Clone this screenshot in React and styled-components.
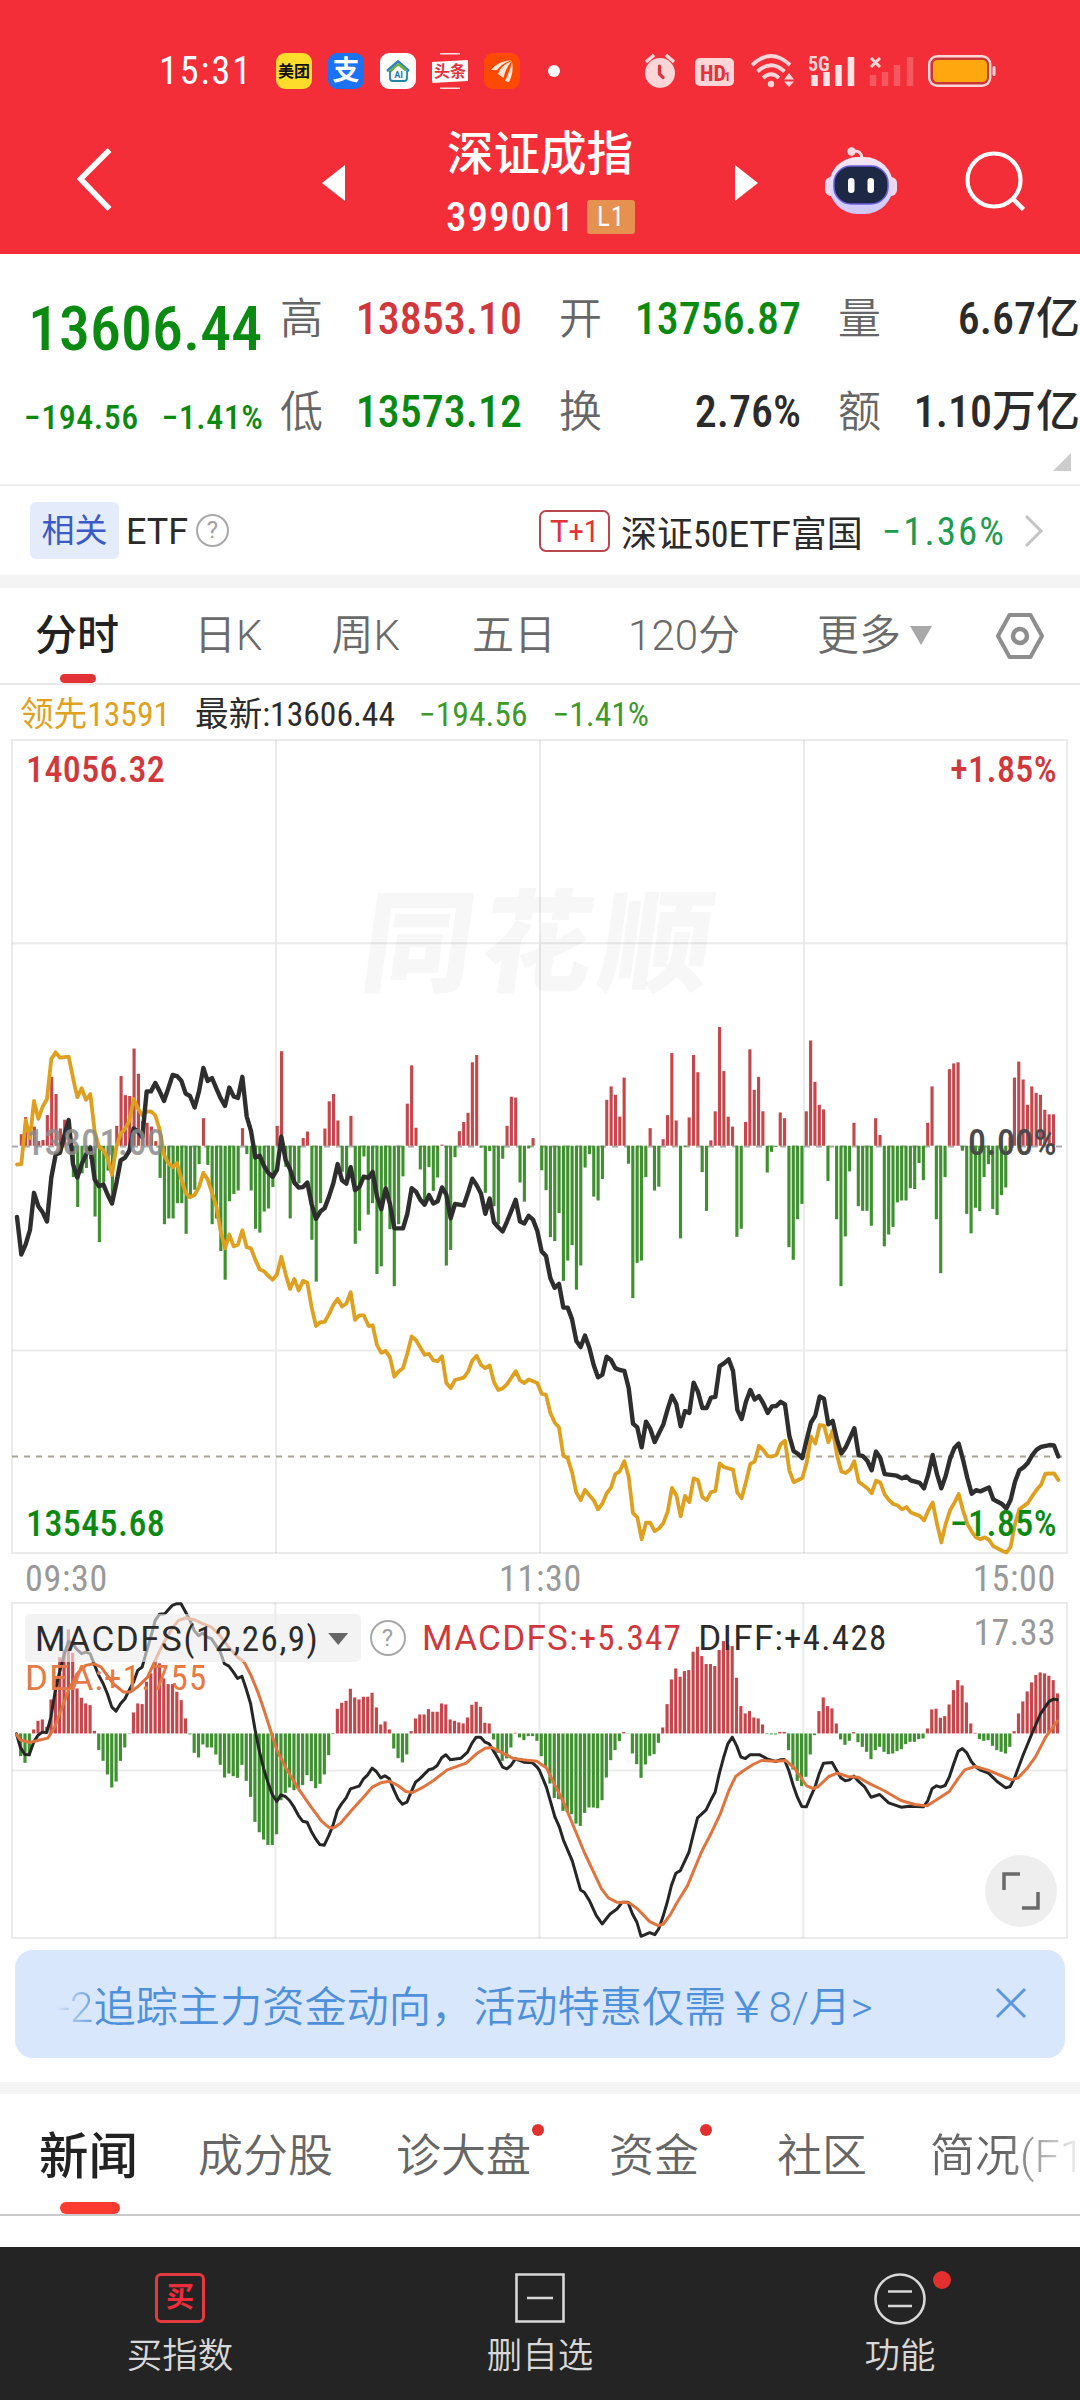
import { Fragment } from "react";
import styled, { createGlobalStyle, css } from "styled-components";

const RED = "#d0383c";
const GREEN = "#0b8a12";
const DARK = "#2b2b2b";

const quoteColumns = [
  [
    { label: "高", value: "13853.10", color: RED },
    { label: "低", value: "13573.12", color: GREEN },
  ],
  [
    { label: "开", value: "13756.87", color: GREEN },
    { label: "换", value: "2.76%", color: DARK },
  ],
  [
    { label: "量", value: "6.67亿", color: DARK },
    { label: "额", value: "1.10万亿", color: DARK },
  ],
];

const periodTabs = [
  { label: "分时", gap: 0, active: true },
  { label: "日K", gap: 75 },
  { label: "周K", gap: 69 },
  { label: "五日", gap: 72 },
  { label: "120分", gap: 72 },
  { label: "更多", gap: 77, arrow: true },
];

const newsTabs = [
  { label: "新闻", gap: 0, active: true },
  { label: "成分股", gap: 60 },
  { label: "诊大盘", gap: 63, dot: true },
  { label: "资金", gap: 78, dot: true },
  { label: "社区", gap: 78 },
  { label: "简况(F10)", gap: 63, faded: true },
];

// one value per minute, above (+) or below (-) yesterday's close
const leadBars = [
  0, 30, 75, 25, 50, 12, 15, 80, 180, 135, 45, 68, 35, -82, -160, -72, -58, -35, -185, -252, -95, -65, -140, 52, 182,
  132, 130, 254, 188, 65, 60, 50, 12, -84, -205, -190, -190, -150, -150, -230, -130, -115, -48, 72, -50, -205, -190,
  -275, -350, -145, -126, -117, 46, -22, -117, -217, -227, -172, -164, -108, 52, 247, -55, -190, -103, -98, 20, 37,
  -246, -355, -150, 45, 116, 135, 66, -68, -90, 78, -256, -222, -28, -180, -150, -335, -315, -105, -218, -367, -205,
  -80, 110, 210, 47, -62, -150, -56, -118, -83, 3, -313, -272, -30, 38, 62, 86, 218, 237, -5, -123, -14, -158, -205,
  -34, 52, 128, 126, -96, -146, -7, 20, 0, -64, -116, -239, -249, -176, -353, -300, -260, -376, -313, -57, -22, -133,
  -143, -87, 120, 155, 133, 76, 178, -47, -398, -306, -300, -82, 46, -117, -107, 17, 80, 242, 66, -242, -3, 74, 237,
  192, -69, -170, 14, 90, 310, 195, 76, 50, -238, -217, 62, 252, 146, 180, 90, -70, -16, -3, 87, 72, -265, -298, -192,
  -152, 90, 275, 167, 107, 95, -92, 0, -192, -367, -237, -67, 60, -158, -170, -170, -209, 72, 28, -263, -232, -212,
  -148, -143, -143, -111, -113, -45, -90, 60, 155, -192, -333, -82, 200, 215, 218, -13, -178, -229, -162, -171, -82,
  -48, -165, -181, -129, -109, 22, 178, 220, 173, 107, 155, 138, 133, 94, 82, 82,
];

const macdBars = [
  0, -68, -88, -68, 12, 38, 42, 20, 102, 165, 228, 250, 312, 242, 135, 107, 90, 85, 8, -50, -82, -123, -162, -144, -82,
  -42, -1, 63, 90, 88, 155, 180, 220, 210, 165, 148, 148, 125, 100, 45, -3, -58, -72, -33, -42, -42, -63, -94, -132,
  -120, -128, -133, -94, -142, -190, -265, -296, -318, -334, -334, -302, -200, -178, -162, -170, -165, -155, -125,
  -143, -164, -151, -123, -65, -2, 74, 92, 98, 134, 108, 102, 110, 110, 122, 78, 27, 36, 12, -45, -74, -87, -63, 7,
  45, 57, 57, 73, 65, 65, 90, 87, 42, 38, 33, 30, 48, 86, 95, 80, 32, 30, -18, -58, -82, -75, -42, 2, -12, -20, -8,
  -8, -22, -68, -100, -150, -193, -197, -232, -236, -242, -270, -277, -238, -222, -222, -224, -200, -132, -80, -50,
  -23, 4, -1, -60, -92, -133, -93, -67, -62, -28, 18, 88, 162, 195, 170, 187, 190, 245, 260, 232, 208, 208, 202, 250,
  277, 265, 262, 167, 82, 60, 67, 48, 45, 27, -2, -3, -3, 5, 5, -50, -108, -142, -158, -130, -63, -5, 67, 108, 82, 75,
  30, -18, -34, -22, 4, -26, -40, -55, -77, -50, -40, -55, -62, -60, -53, -47, -32, -25, -25, -17, -15, 15, 72, 74,
  47, 52, 87, 130, 160, 144, 93, 30, 2, -17, -22, -20, -37, -50, -55, -60, -40, 7, 60, 96, 126, 153, 175, 183, 180,
  173, 160, 120,
];

// every line is stored in parts: x offset of the part, then its "x,y" pairs
const priceLine = [
  [
    0,
    "51,618 64,716 77,690 90,652 102,555 115,590 128,606 141,630 154,515 167,455 180,450 193,405 206,365 219,480 232,515 245,480 258,455 271,437 284,520 297,538 310,533 323,560 336,583 349,530 362,470 375,463 388,445 401,387 414,395 427,410 440,290 453,290 466,268 479,290 492,315 505,282 518,247 531,250 544,262 557,296 570,302 584,332 597,290 610,229 623,263 636,255 649,282 662,308 675,328 688,280 701,303 714,307 727,252 740,355 753,393 766,463 779,458 792,485 805,503 818,513 831,495 844,408 857,470 870,493 883,528 896,541 909,540 922,528 935,585 948,623 961,604 974,595 987,565 1000,530 1013,480 1026,522 1039,531 1052,488 1065,548 1078,540",
  ],
  [
    1080,
    "11,513 26,516 38,500 51,565 64,598 77,543 90,585 103,648 129,648 142,610 155,543 168,552 181,573 194,586 207,561 220,583 233,577 246,541 259,560 272,622 285,584 311,588 324,555 337,518 350,535 363,557 376,610 389,570 402,632 415,645 428,656 441,630 454,602 467,573 480,630 493,635 506,615 519,625 532,655 545,708 558,720 571,778 584,803 597,793 610,855 623,855 636,885 649,942 662,958 675,928 688,960 701,1005 714,1037 727,1030 740,983 753,992 766,1013 779,1018 793,1020 806,1065 819,1158 832,1168 845,1220 858,1153 871,1172 884,1206 910,1160 923,1120 936,1085 949,1107 962,1165 975,1125 988,1130 1001,1051 1014,1075 1027,1117 1040,1117 1053,1090 1066,1088 1079,1008",
  ],
  [
    2160,
    "13,1000 26,990 39,1020 52,1122 65,1146 78,1100 91,1070 104,1095 117,1086 130,1105 143,1130 156,1113 169,1112 182,1101 195,1108 208,1190 221,1230 234,1237 247,1248 260,1200 273,1155 286,1137 299,1087 312,1093 325,1160 338,1151 351,1200 364,1236 377,1220 390,1195 403,1170 416,1240 429,1243 442,1255 455,1280 468,1231 481,1248 494,1290 530,1294 546,1301 559,1296 572,1306 599,1313 612,1327 625,1290 638,1240 651,1290 664,1327 677,1295 690,1250 703,1222 716,1210 729,1252 742,1300 755,1341 768,1332 781,1335 807,1325 820,1356 833,1362 846,1368 859,1380 872,1357 885,1310 898,1280 911,1272 924,1260 937,1240 950,1226 963,1219 989,1214 1002,1215 1015,1244",
  ],
];

const leadLine = [
  [
    0,
    "51,481 64,480 77,365 90,412 102,315 115,362 128,330 141,310 154,205 167,188 180,202 206,199 219,255 232,305 245,282 258,312 271,297 284,395 297,435 310,443 323,465 336,508 349,435 362,400 375,388 388,368 401,310 414,335 427,352 440,343 453,342 466,353 479,390 492,455 505,478 518,488 531,477 544,520 557,555 570,567 584,560 597,540 610,503 623,520 636,555 649,590 662,655 675,700 688,664 701,695 714,690 727,653 740,697 753,700 766,730 779,755 792,760 805,772 818,782 831,768 844,722 857,768 870,806 883,780 896,810 909,785 922,790 935,855 948,903 961,893 974,892 987,872 1000,848 1013,832 1026,852 1039,844 1052,815 1065,887 1078,875",
  ],
  [
    1080,
    "11,875 26,903 38,901 51,953 64,973 77,968 90,985 103,1035 116,1022 129,1013 142,975 155,930 168,940 194,978 207,976 220,993 233,995 246,982 259,1052 272,1065 285,1044 311,1038 324,1023 337,993 350,981 363,1005 376,1013 389,1006 402,1050 415,1070 428,1066 441,1055 467,1021 480,1045 493,1052 506,1043 532,1052 545,1080 558,1083 571,1130 584,1155 597,1168 610,1242 623,1248 636,1285 649,1338 662,1358 675,1331 688,1345 701,1358 714,1382 727,1367 740,1340 753,1325 766,1290 779,1283 793,1256 806,1297 819,1392 832,1403 845,1460 858,1417 871,1417 884,1439 897,1432 910,1418 923,1388 936,1326 949,1345 962,1400 975,1347 988,1363 1001,1301 1014,1306 1027,1350 1040,1358 1053,1337 1066,1334 1079,1262",
  ],
  [
    2160,
    "13,1272 39,1278 52,1338 65,1353 78,1310 91,1263 104,1257 117,1216 130,1227 143,1243 156,1244 169,1240 182,1212 195,1203 208,1280 221,1311 247,1300 260,1260 273,1192 286,1210 299,1162 312,1163 325,1207 338,1175 351,1240 364,1283 377,1287 390,1278 403,1256 416,1310 442,1327 455,1340 468,1307 481,1312 494,1343 507,1358 520,1368 533,1372 546,1382 559,1376 572,1390 599,1399 612,1411 625,1385 638,1364 651,1420 664,1468 677,1420 690,1385 703,1365 716,1342 729,1385 742,1420 755,1440 768,1455 781,1460 794,1455 807,1462 820,1478 846,1490 859,1495 872,1480 885,1420 898,1382 924,1365 937,1347 950,1331 963,1318 976,1289 1002,1288 1015,1305",
  ],
];

const diffLine = [
  [
    0,
    "49,580 60,620 73,642 86,643 99,605 111,585 124,575 137,576 149,530 162,450 174,395 187,345 200,303 212,310 225,328 238,340 250,335 263,340 275,372 288,405 301,430 313,460 326,500 338,512 351,490 364,475 376,450 389,425 401,390 414,380 426,335 439,290 452,240 464,222 480,220 490,208 502,195 515,190 527,190 540,215 553,240 565,270 578,286 590,278 603,290 615,295 628,315 641,335 653,370 666,377 679,395 691,414 704,408 716,445 729,490 742,568 754,630 767,685 779,725 792,762 805,783 817,763 830,768 842,780 855,800 868,825 880,842 893,845 905,872 918,895 930,912 943,914 956,885 968,855 981,810 993,790 1006,773 1019,745 1044,737 1057,715 1069,703 1082,683 1094,693 1107,712 1119,706 1132,715 1145,748 1157,775 1170,791 1183,785 1195,755 1208,725 1220,715 1246,688 1258,685 1271,675 1284,652 1296,643 1309,658 1340,653 1359,635 1372,608 1384,590 1397,590 1410,605 1422,610 1435,632 1448,655 1461,680 1473,685 1485,675 1498,655 1523,665 1548,667 1561,680",
  ],
  [
    1568,
    "0,690 20,740 45,830 58,860 70,900 95,960 119,1048 130,1055 145,1080 165,1125 182,1150 205,1120 225,1105 240,1085 257,1085 270,1120 283,1145 295,1187 320,1176 335,1182 346,1165 358,1130 371,1085 383,1035 396,998 409,990 434,935 447,880 459,832 484,808 497,780 510,755 522,700 535,650 547,610 560,590 573,617 585,650 598,654 611,643 640,643 661,655 686,663 699,658 711,657 724,690 737,735 749,770 762,798 775,799 787,770 800,740 812,700 825,668 850,666 863,690 875,712 888,721 900,718 913,707 926,722 945,740 963,770 988,762 1014,787 1050,800 1075,797 1115,799 1128,780 1140,745 1153,736 1165,740 1178,735 1190,710 1203,670 1216,632 1228,624 1241,637 1254,663 1266,678 1279,688 1304,698 1329,723 1354,742 1367,738 1380,712 1404,645 1430,580 1455,520 1480,483 1493,476 1504,478",
  ],
];

const deaLine = [
  [
    0,
    "49,582 60,598 86,606 111,600 140,593 160,560 180,505 200,450 225,400 250,375 275,370 295,380 330,430 360,455 380,455 400,440 430,410 452,360 475,310 500,265 520,240 540,233 565,238 590,250 615,260 640,285 665,320 691,350 710,365 730,405 750,455 770,515 790,580 805,628 830,680 868,745 905,800 935,842 955,860 970,862 990,848 1020,812 1050,778 1082,740 1107,727 1132,722 1157,735 1180,753 1200,756 1230,740 1260,720 1300,688 1355,668 1385,640 1410,623 1430,621 1460,637 1490,653 1520,658 1560,662",
  ],
  [
    1568,
    "0,668 20,682 50,745 70,785 100,860 130,935 155,990 180,1045 200,1072 225,1085 260,1086 285,1105 320,1143 345,1155 360,1150 380,1122 400,1085 430,1035 450,985 470,935 500,875 525,820 550,750 570,707 590,692 620,672 645,660 685,662 715,660 740,682 775,735 795,744 810,738 840,708 865,698 895,708 925,710 960,730 1000,750 1050,780 1090,792 1125,796 1150,780 1190,753 1215,715 1235,688 1265,678 1300,688 1340,705 1370,718 1390,712 1415,685 1440,650 1470,590 1504,542",
  ],
];

const toPoints = (parts) =>
  parts
    .map(([offset, pairs]) =>
      pairs
        .split(" ")
        .map((pair) => {
          const [x, y] = pair.split(",").map(Number);
          return `${x + offset},${y}`;
        })
        .join(" ")
    )
    .join(" ");

// figures are set in the condensed face, everything around them is not
function Mixed({ children }) {
  return children
    .split(/([\d.,:%+\-−()/]+)/)
    .map((part, i) => (i % 2 ? <Num key={i}>{part}</Num> : <Fragment key={i}>{part}</Fragment>));
}

function Bars({ values, start, step, base, width }) {
  return values.map((v, i) => (
    <rect
      key={i}
      x={start + step * i - width / 2}
      y={v > 0 ? base - v : base}
      width={width}
      height={Math.abs(v)}
      fill={v > 0 ? "#c4484b" : "#3f9130"}
    />
  ));
}

function StatusBar() {
  return (
    <StatusRow>
      <Clock>15:31</Clock>
      <AppIcons>
        <AppIcon $bg="#fedc2c">
          <text x="18" y="24" fontSize="16" fontWeight="700" textAnchor="middle" fill="#111">
            美团
          </text>
        </AppIcon>
        <AppIcon $bg="#1b72f3">
          <text x="18" y="27" fontSize="27" fontWeight="700" textAnchor="middle" fill="#fff">
            支
          </text>
        </AppIcon>
        <AppIcon $bg="#ffffff">
          <path d="M7 18 L18 8.500 L29 18" fill="none" stroke="#2d7fc0" strokeWidth="2.500" />
          <path d="M9 19.500 C13 17 15 12 19 11.500 L26 17.500" fill="none" stroke="#6cb544" strokeWidth="2.500" />
          <path d="M10 18 V25 Q10 28 13 28 H24 Q27 28 27 25 V18" fill="none" stroke="#1f86a8" strokeWidth="1.800" />
          <text x="18.500" y="25" fontSize="9" fontWeight="700" textAnchor="middle" fill="#1f78b8">
            AI
          </text>
        </AppIcon>
        <AppIcon $bg="transparent">
          <path d="M8 .8 H28 M8 35.200 H28" stroke="#fff" strokeWidth="1.500" opacity=".85" />
          <path d="M0 9 L36 7 V28 L0 30 Z" fill="#fff" />
          <text x="18" y="24" fontSize="16" fontWeight="700" textAnchor="middle" fill="#e5323a">
            头条
          </text>
        </AppIcon>
        <AppIcon $bg="#fd4a03">
          <path d="M7 17 Q13 8 28 7 Q18 10 13 17 Z" fill="#ffe7d8" />
          <path d="M14 21 Q17 12 28 8 Q22 14 19.500 25 Z" fill="#ffe7d8" />
          <path d="M21 28 Q26 18 28 9 Q30 20 25 29 Z" fill="#ffe7d8" />
        </AppIcon>
      </AppIcons>
      <StatusDot />
      <SystemIcons>
        <SystemIcon $w={34} $gap={0}>
          <circle cx="17" cy="20" r="15" fill="#ffd6d8" />
          <path d="M3 9 L11 2 M31 9 L23 2" stroke="#ffd6d8" strokeWidth="3.500" />
          <path d="M16.500 13 V21 L20 24.500" fill="none" stroke="#e0343c" strokeWidth="3.200" strokeLinecap="round" />
        </SystemIcon>
        <SystemIcon $w={39} $gap={18}>
          <rect x="0" y="5" width="39" height="28" rx="5" fill="#ffd6d8" />
          <CondensedText x="5" y="27.500" fontSize="22" fontWeight="700" fill="#e0343c">
            HD
          </CondensedText>
          <CondensedText x="29" y="27.500" fontSize="13" fontWeight="700" fill="#e0343c">
            1
          </CondensedText>
        </SystemIcon>
        <SystemIcon $w={46} $gap={16.500}>
          <g fill="none" stroke="#ffd6d8" strokeWidth="3.800">
            <path d="M2 12 Q21 -6 40 12" />
            <path d="M7.500 18.500 Q21 6 34.500 18.500" />
            <path d="M13 25 Q21 17.500 29 25" />
          </g>
          <circle cx="21" cy="31" r="3.200" fill="#ffd6d8" />
          <path d="M34 26.500 L39 20 L44 26.500 Z M34 28.500 H44 L39 34 Z" fill="#ffd6d8" />
        </SystemIcon>
        <SystemIcon $w={48} $gap={12}>
          <CondensedText x="0" y="17.500" fontSize="20" fontWeight="600" fill="#ffd6d8">
            5G
          </CondensedText>
          <path d="M6.500 33 V22 M18.500 33 V19 M30.500 33 V12 M43 33 V4" stroke="#ffe3e4" strokeWidth="6.500" />
        </SystemIcon>
        <SystemIcon $w={45} $gap={13}>
          <path d="M2 5 L11 14 M11 5 L2 14" stroke="#ffd6d8" strokeWidth="3" />
          <path d="M4 33 V22 M16 33 V19 M28 33 V12 M41 33 V4" stroke="#f7676e" strokeWidth="6.500" opacity=".75" />
        </SystemIcon>
        <SystemIcon $w={68} $gap={14}>
          <rect x="1.200" y="3.200" width="61" height="29.600" rx="8" fill="#c8363a" stroke="#ffd6d8" strokeWidth="2.400" />
          <rect x="5" y="7" width="54" height="22" rx="4.500" fill="#ffa70f" />
          <rect x="64.500" y="13" width="3" height="10" rx="1.500" fill="#ffd6d8" />
        </SystemIcon>
      </SystemIcons>
    </StatusRow>
  );
}

function TitleBar() {
  return (
    <TitleRow>
      <svg width="36" height="66" viewBox="0 0 36 66">
        <path d="M33.500 2 L4.500 31 L33.500 61" fill="none" stroke="#fff" strokeWidth="5.500" />
      </svg>
      <Arrow $left />
      <TitleBlock>
        <StockName>深证成指</StockName>
        <StockCode>
          399001 <LevelTag>L1</LevelTag>
        </StockCode>
      </TitleBlock>
      <Arrow />
      <Robot width="74" height="68" viewBox="0 0 74 68">
        <defs>
          <linearGradient id="shell" x1="0" y1="0" x2="0" y2="1">
            <stop offset="0" stopColor="#f8e6f2" />
            <stop offset=".6" stopColor="#dcd8fb" />
            <stop offset="1" stopColor="#cdc6fa" />
          </linearGradient>
        </defs>
        <circle cx="27.500" cy="4.500" r="4.200" fill="#fbdce4" />
        <path d="M29 4 Q37 3 38 11" fill="none" stroke="#fbdce4" strokeWidth="3" />
        <rect x="1" y="30" width="14" height="19" rx="6" fill="#f0d9ee" />
        <rect x="59" y="30" width="14" height="19" rx="6" fill="#f0d9ee" />
        <rect x="5" y="10" width="64" height="57" rx="28.500" fill="url(#shell)" />
        <rect x="10" y="19" width="54" height="38" rx="17" fill="#1d2944" stroke="#6b5fe0" strokeWidth="1.500" />
        <rect x="24" y="31" width="6.500" height="15" rx="3.200" fill="#fff" />
        <rect x="43.500" y="31" width="6.500" height="15" rx="3.200" fill="#fff" />
      </Robot>
      <svg width="60" height="60" viewBox="0 0 60 60">
        <circle cx="29" cy="29" r="26.500" fill="none" stroke="#fff" strokeWidth="4.200" />
        <path d="M47 47 L58.500 58.500" stroke="#fff" strokeWidth="4.500" />
      </svg>
    </TitleRow>
  );
}

function QuotePanel() {
  return (
    <Quote>
      <LastPrice>
        <BigPrice>13606.44</BigPrice>
        <Change>
          <span>−194.56</span>
          <span>−1.41%</span>
        </Change>
      </LastPrice>
      <QuoteGrid>
        {quoteColumns.map((column, i) => (
          <QuoteColumn key={i}>
            {column.map(({ label, value, color }) => (
              <QuoteCell key={label}>
                <QuoteLabel>{label}</QuoteLabel>
                <QuoteValue $color={color}>
                  <Mixed>{value}</Mixed>
                </QuoteValue>
              </QuoteCell>
            ))}
          </QuoteColumn>
        ))}
      </QuoteGrid>
      <CornerMark />
    </Quote>
  );
}

function RelatedRow() {
  return (
    <Related>
      <RelatedTag>相关</RelatedTag>
      <RelatedName>ETF</RelatedName>
      <Help $size={33}>?</Help>
      <TPlus>
        <Mixed>T+1</Mixed>
      </TPlus>
      <FundName>
        <Mixed>深证50ETF富国</Mixed>
      </FundName>
      <FundChange>−1.36%</FundChange>
      <svg width="20" height="34" viewBox="0 0 20 34">
        <path d="M2 2 L17 17 L2 32" fill="none" stroke="#c4c4c4" strokeWidth="3" />
      </svg>
    </Related>
  );
}

function PriceChart() {
  return (
    <ChartBox $height={813}>
      <Watermark>同花顺</Watermark>
      <Plot viewBox="36 -628 3165 2124" preserveAspectRatio="none">
        <GridLines d="M828 -628 V1496 M1620 -628 V1496 M2412 -628 V1496 M36 -97 H3201 M36 967 H3201" />
        <DashLine d="M36 434 H3190" $color="#aaa" />
        <Bars values={leadBars} start={51} step={13.01} base={432} width={9.400} />
        <DashLine d="M36 1244 H3190" $color="#a9a592" />
        <Line points={toPoints(leadLine)} $color="#dfa01f" $width={3.800} />
        <Line points={toPoints(priceLine)} $color="#2e2e2e" $width={4.400} />
      </Plot>
      <ChartLabels>
        <LabelRow>
          <ChartLabel $color={RED}>14056.32</ChartLabel>
          <ChartLabel $color={RED}>+1.85%</ChartLabel>
        </LabelRow>
        <LabelRow $lift={8}>
          <ChartLabel $color="rgba(140, 140, 140, .85)">13801.00</ChartLabel>
          <ChartLabel $color="#4a4a4a">0.00%</ChartLabel>
        </LabelRow>
        <LabelRow>
          <ChartLabel $color={GREEN}>13545.68</ChartLabel>
          <ChartLabel $color={GREEN}>−1.85%</ChartLabel>
        </LabelRow>
      </ChartLabels>
    </ChartBox>
  );
}

function MacdChart() {
  return (
    <ChartBox $height={335}>
      <Plot viewBox="36 188 3064 1004" preserveAspectRatio="none">
        <GridLines d="M801 188 V1192 M1568 188 V1192 M2334 188 V1192 M36 690 H3100" />
        <Bars values={macdBars} start={48.500} step={12.600} base={579} width={9.200} />
        <Line points={toPoints(diffLine)} $color="#262626" $width={3} />
        <Line points={toPoints(deaLine)} $color="#e0743f" $width={3} />
      </Plot>
      <MacdHeader>
        <MacdSelect>
          <Mixed>MACDFS(12,26,9)</Mixed>
          <Caret $w={20} $h={12} $color="#666" />
        </MacdSelect>
        <Help $size={36}>?</Help>
        <MacdValue $color={RED}>
          <Mixed>MACDFS:+5.347</Mixed>
        </MacdValue>
        <MacdValue $color={DARK}>
          <Mixed>DIFF:+4.428</Mixed>
        </MacdValue>
        <MacdMax>17.33</MacdMax>
      </MacdHeader>
      <DeaValue>
        <Mixed>DEA:+1.755</Mixed>
      </DeaValue>
      <ExpandButton>
        <svg width="38" height="38" viewBox="0 0 38 38" fill="none" stroke="#6a6a6a" strokeWidth="3.500">
          <path d="M2 18 V2 H18 M36 20 V36 H20" />
        </svg>
      </ExpandButton>
    </ChartBox>
  );
}

function BottomBar() {
  return (
    <BottomNav>
      <NavItem>
        <BuyIcon>买</BuyIcon>
        买指数
      </NavItem>
      <NavItem>
        <svg width="50" height="50" viewBox="0 0 50 50" fill="none" stroke="#d8d8d8" strokeWidth="2.600">
          <path d="M1.500 1.500 H48.500 V48.500 H1.500 Z M12 25 H38" />
        </svg>
        删自选
      </NavItem>
      <NavItem>
        <NavIconWrap>
          <svg width="52" height="52" viewBox="0 0 52 52" fill="none" stroke="#d8d8d8" strokeWidth="2.600">
            <circle cx="26" cy="26" r="24.500" />
            <path d="M14 18.500 H38 M14 33 H38" />
          </svg>
          <Dot $size={18} $top={-2} $right={-25} />
        </NavIconWrap>
        功能
      </NavItem>
    </BottomNav>
  );
}

function App() {
  return (
    <Screen>
      <GlobalStyle />
      <Header>
        <StatusBar />
        <TitleBar />
      </Header>
      <QuotePanel />
      <RelatedRow />
      <Gap $height={13} />
      <PeriodTabs>
        {periodTabs.map(({ label, gap, active, arrow }) => (
          <PeriodTab key={label} $gap={gap} $active={active}>
            {label}
            {arrow && <Caret $w={22} $h={19} $color="#a8a8a8" />}
          </PeriodTab>
        ))}
        <SettingsIcon width="50" height="48" viewBox="0 0 50 48" fill="none" stroke="#8e8e8e">
          <path d="M14.500 3 H35.500 L47 24 L35.500 45 H14.500 L3 24 Z" strokeWidth="4" strokeLinejoin="round" />
          <circle cx="25" cy="24" r="7" strokeWidth="4.500" />
        </SettingsIcon>
      </PeriodTabs>
      <Legend>
        <LegendItem $color="#e0a11e" $ml={0}>
          <Mixed>领先13591</Mixed>
        </LegendItem>
        <LegendItem $color={DARK} $ml={25}>
          <Mixed>最新:13606.44</Mixed>
        </LegendItem>
        <LegendItem $color="#3c9a2b" $ml={24}>
          <Mixed>−194.56</Mixed>
        </LegendItem>
        <LegendItem $color="#3c9a2b" $ml={25}>
          <Mixed>−1.41%</Mixed>
        </LegendItem>
      </Legend>
      <PriceChart />
      <TimeAxis>
        <span>09:30</span>
        <span>11:30</span>
        <span>15:00</span>
      </TimeAxis>
      <MacdChart />
      <Banner>
        <BannerText>
          <Faded>-2</Faded>追踪主力资金动向，活动特惠仅需￥8/月&gt;
        </BannerText>
        <svg width="32" height="32" viewBox="0 0 32 32">
          <path d="M2 2 L30 30 M30 2 L2 30" stroke="#5a97df" strokeWidth="3" />
        </svg>
      </Banner>
      <Gap $height={12} />
      <NewsTabs>
        {newsTabs.map(({ label, gap, active, dot, faded }) => (
          <NewsTab key={label} $gap={gap} $active={active} $faded={faded}>
            {label}
            {dot && <Dot $size={12} $top={-7} $right={-13} />}
          </NewsTab>
        ))}
      </NewsTabs>
      <BottomBar />
    </Screen>
  );
}

const GlobalStyle = createGlobalStyle`
  body {
    margin: 0;
    background-color: #ffffff;
  }
`;

const figures = css`
  font-family: "Roboto Condensed", "Noto Sans CJK SC", sans-serif;
`;

const Screen = styled.div`
  display: flex;
  flex-direction: column;
  width: 1080px;
  height: 2400px;
  overflow: hidden;
  background-color: #ffffff;
  color: ${DARK};
  font-family: Roboto, "Noto Sans CJK SC", sans-serif;
`;

const Num = styled.span`
  ${figures}
`;

const Header = styled.div`
  height: 254px;
  background-color: #f32e38;
  color: #ffffff;
`;

const StatusRow = styled.div`
  display: flex;
  align-items: center;
  height: 108px;
  padding: 34px 84px 0 159px;
  box-sizing: border-box;
`;

const Clock = styled.div`
  ${figures}
  width: 117px;
  font-size: 38px;
  letter-spacing: 2px;
`;

const AppIcons = styled.div`
  display: flex;
  gap: 16px;
`;

const AppIcon = styled.svg.attrs({ width: 36, height: 36, viewBox: "0 0 36 36" })`
  border-radius: 9px;
  background-color: ${({ $bg }) => $bg};
`;

const StatusDot = styled.div`
  width: 12px;
  height: 12px;
  margin-left: 28px;
  border-radius: 50%;
  background-color: #ffffff;
`;

const SystemIcons = styled.div`
  display: flex;
  margin-left: auto;
`;

const SystemIcon = styled.svg.attrs(({ $w }) => ({ width: $w, height: 36, viewBox: `0 0 ${$w} 36` }))`
  margin-left: ${({ $gap }) => $gap}px;
`;

const CondensedText = styled.text`
  ${figures}
`;

const TitleRow = styled.div`
  display: flex;
  align-items: center;
  height: 146px;
  padding: 0 54px 0 76px;
`;

const Arrow = styled.div`
  width: 0;
  height: 0;
  border-top: 18px solid transparent;
  border-bottom: 18px solid transparent;
  margin-top: 3px;
  ${({ $left }) =>
    $left ? "border-right: 23px solid #fff; margin-left: 210px;" : "border-left: 23px solid #fff;"}
`;

const TitleBlock = styled.div`
  width: 390px;
  padding-top: 12px;
  text-align: center;
`;

const StockName = styled.div`
  font-size: 46.5px;
  font-weight: 500;
  line-height: 60px;
`;

const StockCode = styled.div`
  ${figures}
  display: flex;
  justify-content: center;
  align-items: center;
  gap: 12px;
  padding-left: 1px;
  font-size: 41px;
  font-weight: 500;
  line-height: 67px;
  letter-spacing: 1px;
`;

const LevelTag = styled.span`
  width: 48px;
  font-size: 27px;
  font-weight: 400;
  line-height: 34px;
  border-radius: 3px;
  background-color: #e5914f;
`;

const Robot = styled.svg`
  margin: 0 67px 0 66px;
`;

const Quote = styled.div`
  position: relative;
  display: flex;
  height: 232px;
  padding: 22px 0 0 28px;
  box-sizing: border-box;
  border-bottom: 2px solid #efefef;
`;

const LastPrice = styled.div`
  ${figures}
  width: 252px;
  color: ${GREEN};
`;

const BigPrice = styled.div`
  font-size: 62px;
  font-weight: 500;
  line-height: 105px;
`;

const Change = styled.div`
  display: flex;
  gap: 23px;
  margin-left: -4px;
  font-size: 34px;
  font-weight: 500;
  line-height: 73px;
  letter-spacing: 0.5px;
`;

const QuoteGrid = styled.div`
  display: flex;
  gap: 37px;
`;

const QuoteColumn = styled.div`
  width: 242px;
`;

const QuoteCell = styled.div`
  display: flex;
  justify-content: space-between;
  height: 93px;
  line-height: 87px;
  white-space: nowrap;
`;

const QuoteLabel = styled.div`
  font-size: 43px;
  font-weight: 350;
  color: #666666;
`;

const QuoteValue = styled.div`
  font-size: 44px;
  font-weight: 500;
  color: ${({ $color }) => $color};
`;

const CornerMark = styled.div`
  position: absolute;
  right: 9px;
  bottom: 13px;
  width: 18px;
  height: 18px;
  background-color: #cccccc;
  clip-path: polygon(100% 0, 100% 100%, 0 100%);
`;

const Related = styled.div`
  display: flex;
  align-items: center;
  height: 89px;
  padding: 0 36px 0 30px;
  font-size: 36px;
`;

const RelatedTag = styled.div`
  width: 89px;
  font-size: 33px;
  line-height: 57px;
  text-align: center;
  color: #3a5ac8;
  border-radius: 6px;
  background-color: #e4ecfc;
`;

const RelatedName = styled.div`
  width: 60px;
  margin: 3px 10px 0 7px;
`;

const Help = styled.div`
  width: ${({ $size }) => $size}px;
  height: ${({ $size }) => $size}px;
  box-sizing: border-box;
  border: 2.5px solid #a8a8a8;
  border-radius: 50%;
  font-size: 24px;
  line-height: ${({ $size }) => $size - 4}px;
  text-align: center;
  color: #a0a0a0;
`;

const TPlus = styled.div`
  width: 71px;
  height: 42px;
  margin-left: auto;
  box-sizing: border-box;
  border: 2px solid #b8484e;
  border-radius: 7px;
  font-size: 31px;
  line-height: 39px;
  text-align: center;
  color: #e0343c;
`;

const FundName = styled.div`
  margin: 0 19px 0 11px;
`;

const FundChange = styled.div`
  ${figures}
  margin-right: 18px;
  padding-top: 2px;
  font-size: 39px;
  letter-spacing: 2px;
  color: #1d9c50;
`;

const Gap = styled.div`
  flex: none;
  height: ${({ $height }) => $height}px;
  background-color: #f4f4f4;
`;

const PeriodTabs = styled.div`
  display: flex;
  align-items: center;
  height: 97px;
  padding: 0 35px;
  box-sizing: border-box;
  border-bottom: 2px solid #e9e9e9;
`;

const PeriodTab = styled.div`
  position: relative;
  display: flex;
  align-items: center;
  height: 95px;
  margin-left: ${({ $gap }) => $gap}px;
  font-size: 42px;
  line-height: 99px;
  color: #6a6a6a;
  font-weight: 350;
  ${({ $active }) =>
    $active &&
    css`
      color: #222222;
      font-weight: 500;

      &::after {
        content: "";
        position: absolute;
        left: 25px;
        bottom: 0;
        width: 36px;
        height: 9px;
        border-radius: 5px;
        background-color: #e33236;
      }
    `}
`;

const Caret = styled.span`
  width: ${({ $w }) => $w}px;
  height: ${({ $h }) => $h}px;
  margin-left: 9px;
  background-color: ${({ $color }) => $color};
  clip-path: polygon(0 0, 100% 0, 50% 100%);
`;

const SettingsIcon = styled.svg`
  margin-left: auto;
`;

const Legend = styled.div`
  display: flex;
  height: 55px;
  padding-left: 20px;
  font-size: 33.6px;
  line-height: 60px;
`;

const LegendItem = styled.div`
  margin-left: ${({ $ml }) => $ml}px;
  color: ${({ $color }) => $color};
`;

const ChartBox = styled.div`
  position: relative;
  flex: none;
  height: ${({ $height }) => $height}px;
  margin: 0 13px 0 12px;
  outline: 2px solid #ebebeb;
  outline-offset: -1px;
`;

const Watermark = styled.div`
  position: absolute;
  left: 351px;
  top: 135px;
  font-size: 111px;
  font-weight: 900;
  line-height: 140px;
  letter-spacing: 8px;
  color: #f7f7f7;
  transform: skewX(-8deg);
`;

const Plot = styled.svg`
  position: absolute;
  display: block;
  width: 100%;
  height: 100%;
  overflow: visible;
`;

const GridLines = styled.path`
  fill: none;
  stroke: rgba(0, 0, 0, 0.08);
  stroke-width: 2px;
  vector-effect: non-scaling-stroke;
`;

const DashLine = styled.path`
  fill: none;
  stroke: ${({ $color }) => $color};
  stroke-width: 2px;
  stroke-dasharray: 6 6;
  vector-effect: non-scaling-stroke;
`;

const Line = styled.polyline`
  fill: none;
  stroke: ${({ $color }) => $color};
  stroke-width: ${({ $width }) => $width}px;
  stroke-linejoin: round;
  stroke-linecap: round;
  vector-effect: non-scaling-stroke;
`;

const ChartLabels = styled.div`
  position: relative;
  display: flex;
  flex-direction: column;
  justify-content: space-between;
  height: 100%;
  padding: 5px 10px 4px 14px;
  box-sizing: border-box;
`;

const LabelRow = styled.div`
  display: flex;
  justify-content: space-between;
  padding-bottom: ${({ $lift = 0 }) => $lift}px;
`;

const ChartLabel = styled.span`
  ${figures}
  font-size: 36px;
  font-weight: 500;
  line-height: 50px;
  letter-spacing: 0.4px;
  color: ${({ $color }) => $color};
`;

const TimeAxis = styled.div`
  ${figures}
  display: flex;
  justify-content: space-between;
  height: 50px;
  padding: 0 24px 0 25px;
  font-size: 36px;
  line-height: 52px;
  letter-spacing: 0.7px;
  color: #999999;
`;

const MacdHeader = styled.div`
  position: relative;
  display: flex;
  align-items: center;
  padding: 11px 11px 0 13px;
  font-size: 35px;
  letter-spacing: 1.3px;
`;

const MacdSelect = styled.div`
  display: flex;
  align-items: center;
  width: 336px;
  height: 48px;
  margin-right: 9px;
  padding: 2px 0 0 10px;
  box-sizing: border-box;
  border-radius: 5px;
  background-color: rgba(236, 236, 236, 0.62);
  letter-spacing: 1.5px;
`;

const MacdValue = styled.div`
  margin-left: 16px;
  padding-top: 1px;
  color: ${({ $color }) => $color};
`;

const MacdMax = styled.div`
  ${figures}
  margin: -10px 0 0 auto;
  font-size: 36px;
  letter-spacing: 0.4px;
  color: #999999;
`;

const DeaValue = styled.div`
  position: relative;
  padding-left: 13px;
  font-size: 35px;
  line-height: 34px;
  letter-spacing: 1.3px;
  color: #e57a45;
`;

const ExpandButton = styled.div`
  position: absolute;
  right: 10px;
  bottom: 11px;
  display: flex;
  align-items: center;
  justify-content: center;
  width: 72px;
  height: 72px;
  border-radius: 50%;
  background-color: #eeeeee;
`;

const Banner = styled.div`
  display: flex;
  align-items: center;
  justify-content: space-between;
  flex: none;
  height: 108px;
  margin: 12px 15px 24px;
  padding: 0 38px 2px 43px;
  box-sizing: border-box;
  border-radius: 18px;
  background-color: #d9e7fd;
`;

const BannerText = styled.div`
  font-size: 42.2px;
  font-weight: 350;
  white-space: nowrap;
  color: #4f90da;
`;

const Faded = styled.span`
  background: linear-gradient(90deg, #cfe0f8, #6aa0e0);
  background-clip: text;
  color: transparent;
`;

const NewsTabs = styled.div`
  display: flex;
  flex: none;
  align-items: center;
  height: 122px;
  padding: 5px 0 0 39px;
  box-sizing: border-box;
  border-bottom: 2px solid #c9c9c9;
  overflow: hidden;
`;

const NewsTab = styled.div`
  position: relative;
  flex: none;
  margin-left: ${({ $gap }) => $gap}px;
  font-size: 45px;
  line-height: 52px;
  color: #666666;
  font-weight: 350;
  ${({ $faded }) => $faded && "mask-image: linear-gradient(90deg, #000 75px, rgba(0, 0, 0, 0.1) 148px);"}
  ${({ $active }) =>
    $active &&
    css`
      font-size: 49.5px;
      font-weight: 500;
      color: #222222;

      &::after {
        content: "";
        position: absolute;
        left: 21px;
        bottom: -31px;
        width: 60px;
        height: 12px;
        border-radius: 6px;
        background-color: #fb3b2f;
      }
    `}
`;

const Dot = styled.span`
  position: absolute;
  top: ${({ $top }) => $top}px;
  right: ${({ $right }) => $right}px;
  width: ${({ $size }) => $size}px;
  height: ${({ $size }) => $size}px;
  border-radius: 50%;
  background-color: #e2302f;
`;

const BottomNav = styled.div`
  display: grid;
  grid-template-columns: repeat(3, 1fr);
  height: 153px;
  margin-top: auto;
  background-color: #242424;
`;

const NavItem = styled.div`
  display: flex;
  flex-direction: column;
  align-items: center;
  justify-content: space-between;
  padding: 26px 0 20px;
  font-size: 35.5px;
  font-weight: 350;
  line-height: 48px;
  color: #d8d8d8;
`;

const NavIconWrap = styled.div`
  position: relative;
  display: flex;
`;

const BuyIcon = styled.div`
  width: 50px;
  height: 50px;
  box-sizing: border-box;
  border: 3px solid #e23a40;
  border-radius: 6px;
  font-size: 28px;
  font-weight: 700;
  line-height: 44px;
  text-align: center;
  color: #ee2c3c;
`;

export default App;
